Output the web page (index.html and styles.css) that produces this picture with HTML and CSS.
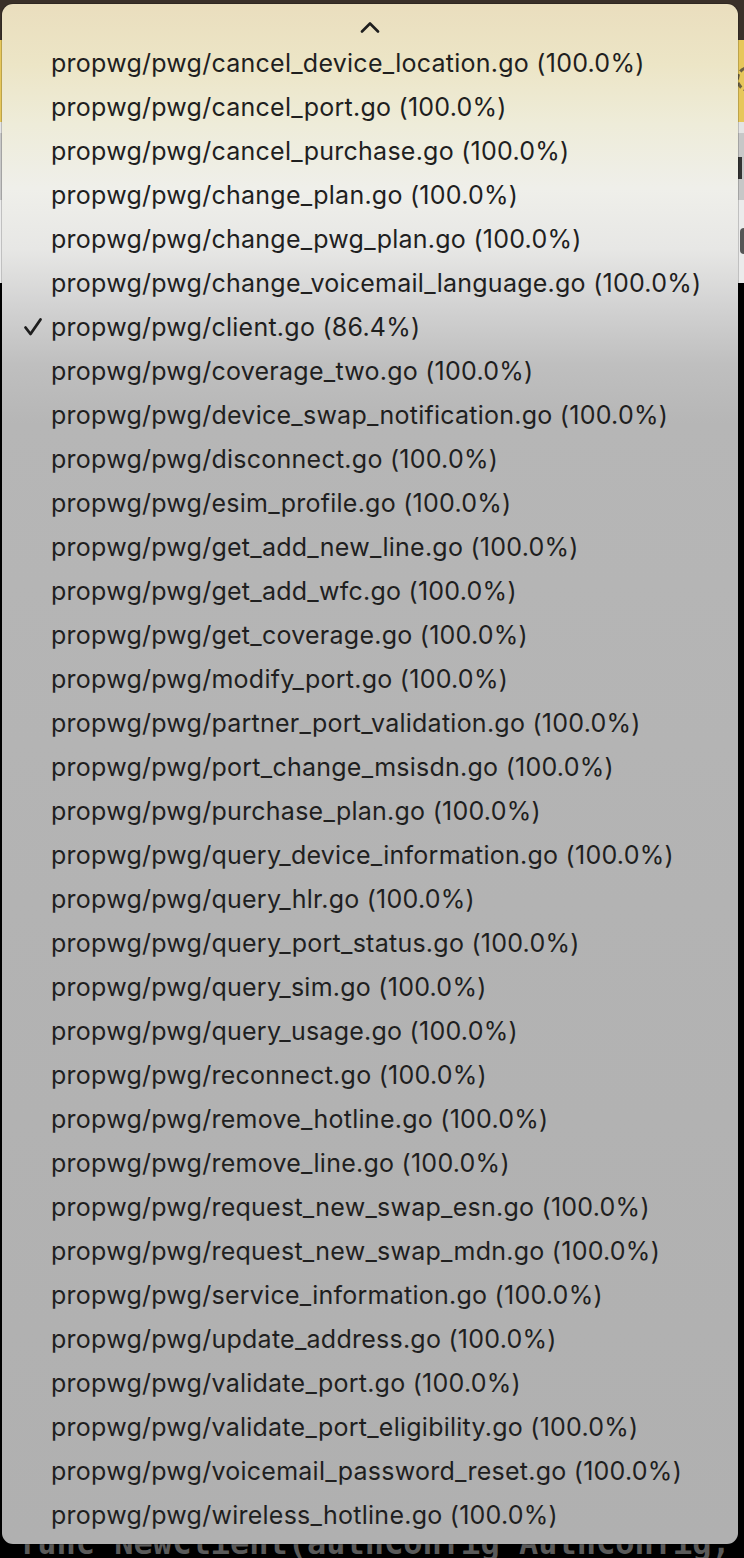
FILE: index.html
```html
<!DOCTYPE html>
<html>
<head>
<meta charset="utf-8">
<link rel="stylesheet" href="styles.css">
</head>
<body>
<div class="app">
  <div class="titlebar"></div>
  <div class="banner"><span class="banner-icon"></span></div>
  <div class="band-light"></div>
  <div class="band-grey"><span class="band-text"></span></div>
  <div class="band-light2"><span class="band-box"></span></div>
  <div class="editor">
    <div class="code-line">func NewClient(authConfig AuthConfig,</div>
  </div>

  <div class="menu">
    <div class="scroll-up">
      <svg width="20" height="12" viewBox="0 0 20 12"><polyline points="2,10.5 10,2.5 18,10.5" fill="none" stroke="#1e1e1e" stroke-width="2.6" stroke-linecap="round" stroke-linejoin="round"/></svg>
    </div>
    <ul class="items">
      <li>propwg/pwg/cancel_device_location.go (100.0%)</li>
      <li>propwg/pwg/cancel_port.go (100.0%)</li>
      <li>propwg/pwg/cancel_purchase.go (100.0%)</li>
      <li>propwg/pwg/change_plan.go (100.0%)</li>
      <li>propwg/pwg/change_pwg_plan.go (100.0%)</li>
      <li>propwg/pwg/change_voicemail_language.go (100.0%)</li>
      <li class="checked"><svg class="check" width="20" height="20" viewBox="0 0 20 20"><polyline points="2.5,10.5 7.5,17 17.5,2.5" fill="none" stroke="#1e1e1e" stroke-width="2.8" stroke-linecap="round" stroke-linejoin="round"/></svg>propwg/pwg/client.go (86.4%)</li>
      <li>propwg/pwg/coverage_two.go (100.0%)</li>
      <li>propwg/pwg/device_swap_notification.go (100.0%)</li>
      <li>propwg/pwg/disconnect.go (100.0%)</li>
      <li>propwg/pwg/esim_profile.go (100.0%)</li>
      <li>propwg/pwg/get_add_new_line.go (100.0%)</li>
      <li>propwg/pwg/get_add_wfc.go (100.0%)</li>
      <li>propwg/pwg/get_coverage.go (100.0%)</li>
      <li>propwg/pwg/modify_port.go (100.0%)</li>
      <li>propwg/pwg/partner_port_validation.go (100.0%)</li>
      <li>propwg/pwg/port_change_msisdn.go (100.0%)</li>
      <li>propwg/pwg/purchase_plan.go (100.0%)</li>
      <li>propwg/pwg/query_device_information.go (100.0%)</li>
      <li>propwg/pwg/query_hlr.go (100.0%)</li>
      <li>propwg/pwg/query_port_status.go (100.0%)</li>
      <li>propwg/pwg/query_sim.go (100.0%)</li>
      <li>propwg/pwg/query_usage.go (100.0%)</li>
      <li>propwg/pwg/reconnect.go (100.0%)</li>
      <li>propwg/pwg/remove_hotline.go (100.0%)</li>
      <li>propwg/pwg/remove_line.go (100.0%)</li>
      <li>propwg/pwg/request_new_swap_esn.go (100.0%)</li>
      <li>propwg/pwg/request_new_swap_mdn.go (100.0%)</li>
      <li>propwg/pwg/service_information.go (100.0%)</li>
      <li>propwg/pwg/update_address.go (100.0%)</li>
      <li>propwg/pwg/validate_port.go (100.0%)</li>
      <li>propwg/pwg/validate_port_eligibility.go (100.0%)</li>
      <li>propwg/pwg/voicemail_password_reset.go (100.0%)</li>
      <li>propwg/pwg/wireless_hotline.go (100.0%)</li>
    </ul>
  </div>
</div>
</body>
</html>
```
FILE: styles.css
```css
* { box-sizing: border-box; }
html, body { margin: 0; padding: 0; }
body { background: #000; }

.app {
  position: relative;
  width: 744px;
  height: 1558px;
  overflow: hidden;
  display: flex;
  flex-direction: column;
  background: #000;
}

.titlebar { height: 40px; background: #3a3029; flex: none; }
.banner { height: 82px; background: #e6c75b; flex: none; position: relative; }
.banner-icon {
  position: absolute; left: 736px; top: 26px;
  width: 26px; height: 26px; border-radius: 50%;
  border: 3px dashed #6b6042;
}
.band-light { height: 11px; background: #e4e4e4; flex: none; }
.band-grey { height: 67px; background: #c7c7c7; flex: none; position: relative; }
.band-text { position: absolute; left: 738px; top: 24px; width: 4px; height: 22px; background: #333; }
.band-light2 { height: 83px; background: #ebebeb; flex: none; position: relative; }
.band-box { position: absolute; left: 740px; top: 28px; width: 14px; height: 26px; border-radius: 4px; background: #555; }

.editor {
  flex: 1;
  display: flex;
  flex-direction: column;
  justify-content: flex-end;
  padding-left: 18px;
}
.code-line {
  font-family: "DejaVu Sans Mono", monospace;
  font-weight: bold;
  font-size: 32px;
  line-height: 30px;
  height: 30px;
  color: #5a5a5a;
  white-space: pre;
}

.menu {
  position: absolute;
  left: 2px;
  top: 4px;
  width: 736px;
  height: 1540px;
  border-radius: 11px;
  overflow: hidden;
  box-shadow: 0 0 0 1px rgba(0,0,0,0.18);
  background: linear-gradient(to bottom,
    #eadebe 0px,
    #ece5c6 60px,
    #eeecd9 120px,
    #efefea 185px,
    #e7e7e5 245px,
    #d3d3d3 300px,
    #bfbfbf 360px,
    #b6b6b6 420px,
    #b3b3b3 900px,
    #b0b0b0 1540px);
  font-family: Inter, "Noto Sans", sans-serif;
  color: #1f1f1f;
}

.scroll-up {
  height: 37px;
  display: flex;
  justify-content: center;
  padding-top: 17px;
}
.scroll-up svg { display: block; margin-left: -1px; }

.items {
  list-style: none;
  margin: 0;
  padding: 0;
}
.items li {
  position: relative;
  height: 44px;
  line-height: 44px;
  padding-left: 49px;
  font-size: 25px;
  letter-spacing: 0.25px;
  white-space: nowrap;
}
.check {
  position: absolute;
  left: 21px;
  top: 12px;
}
```
